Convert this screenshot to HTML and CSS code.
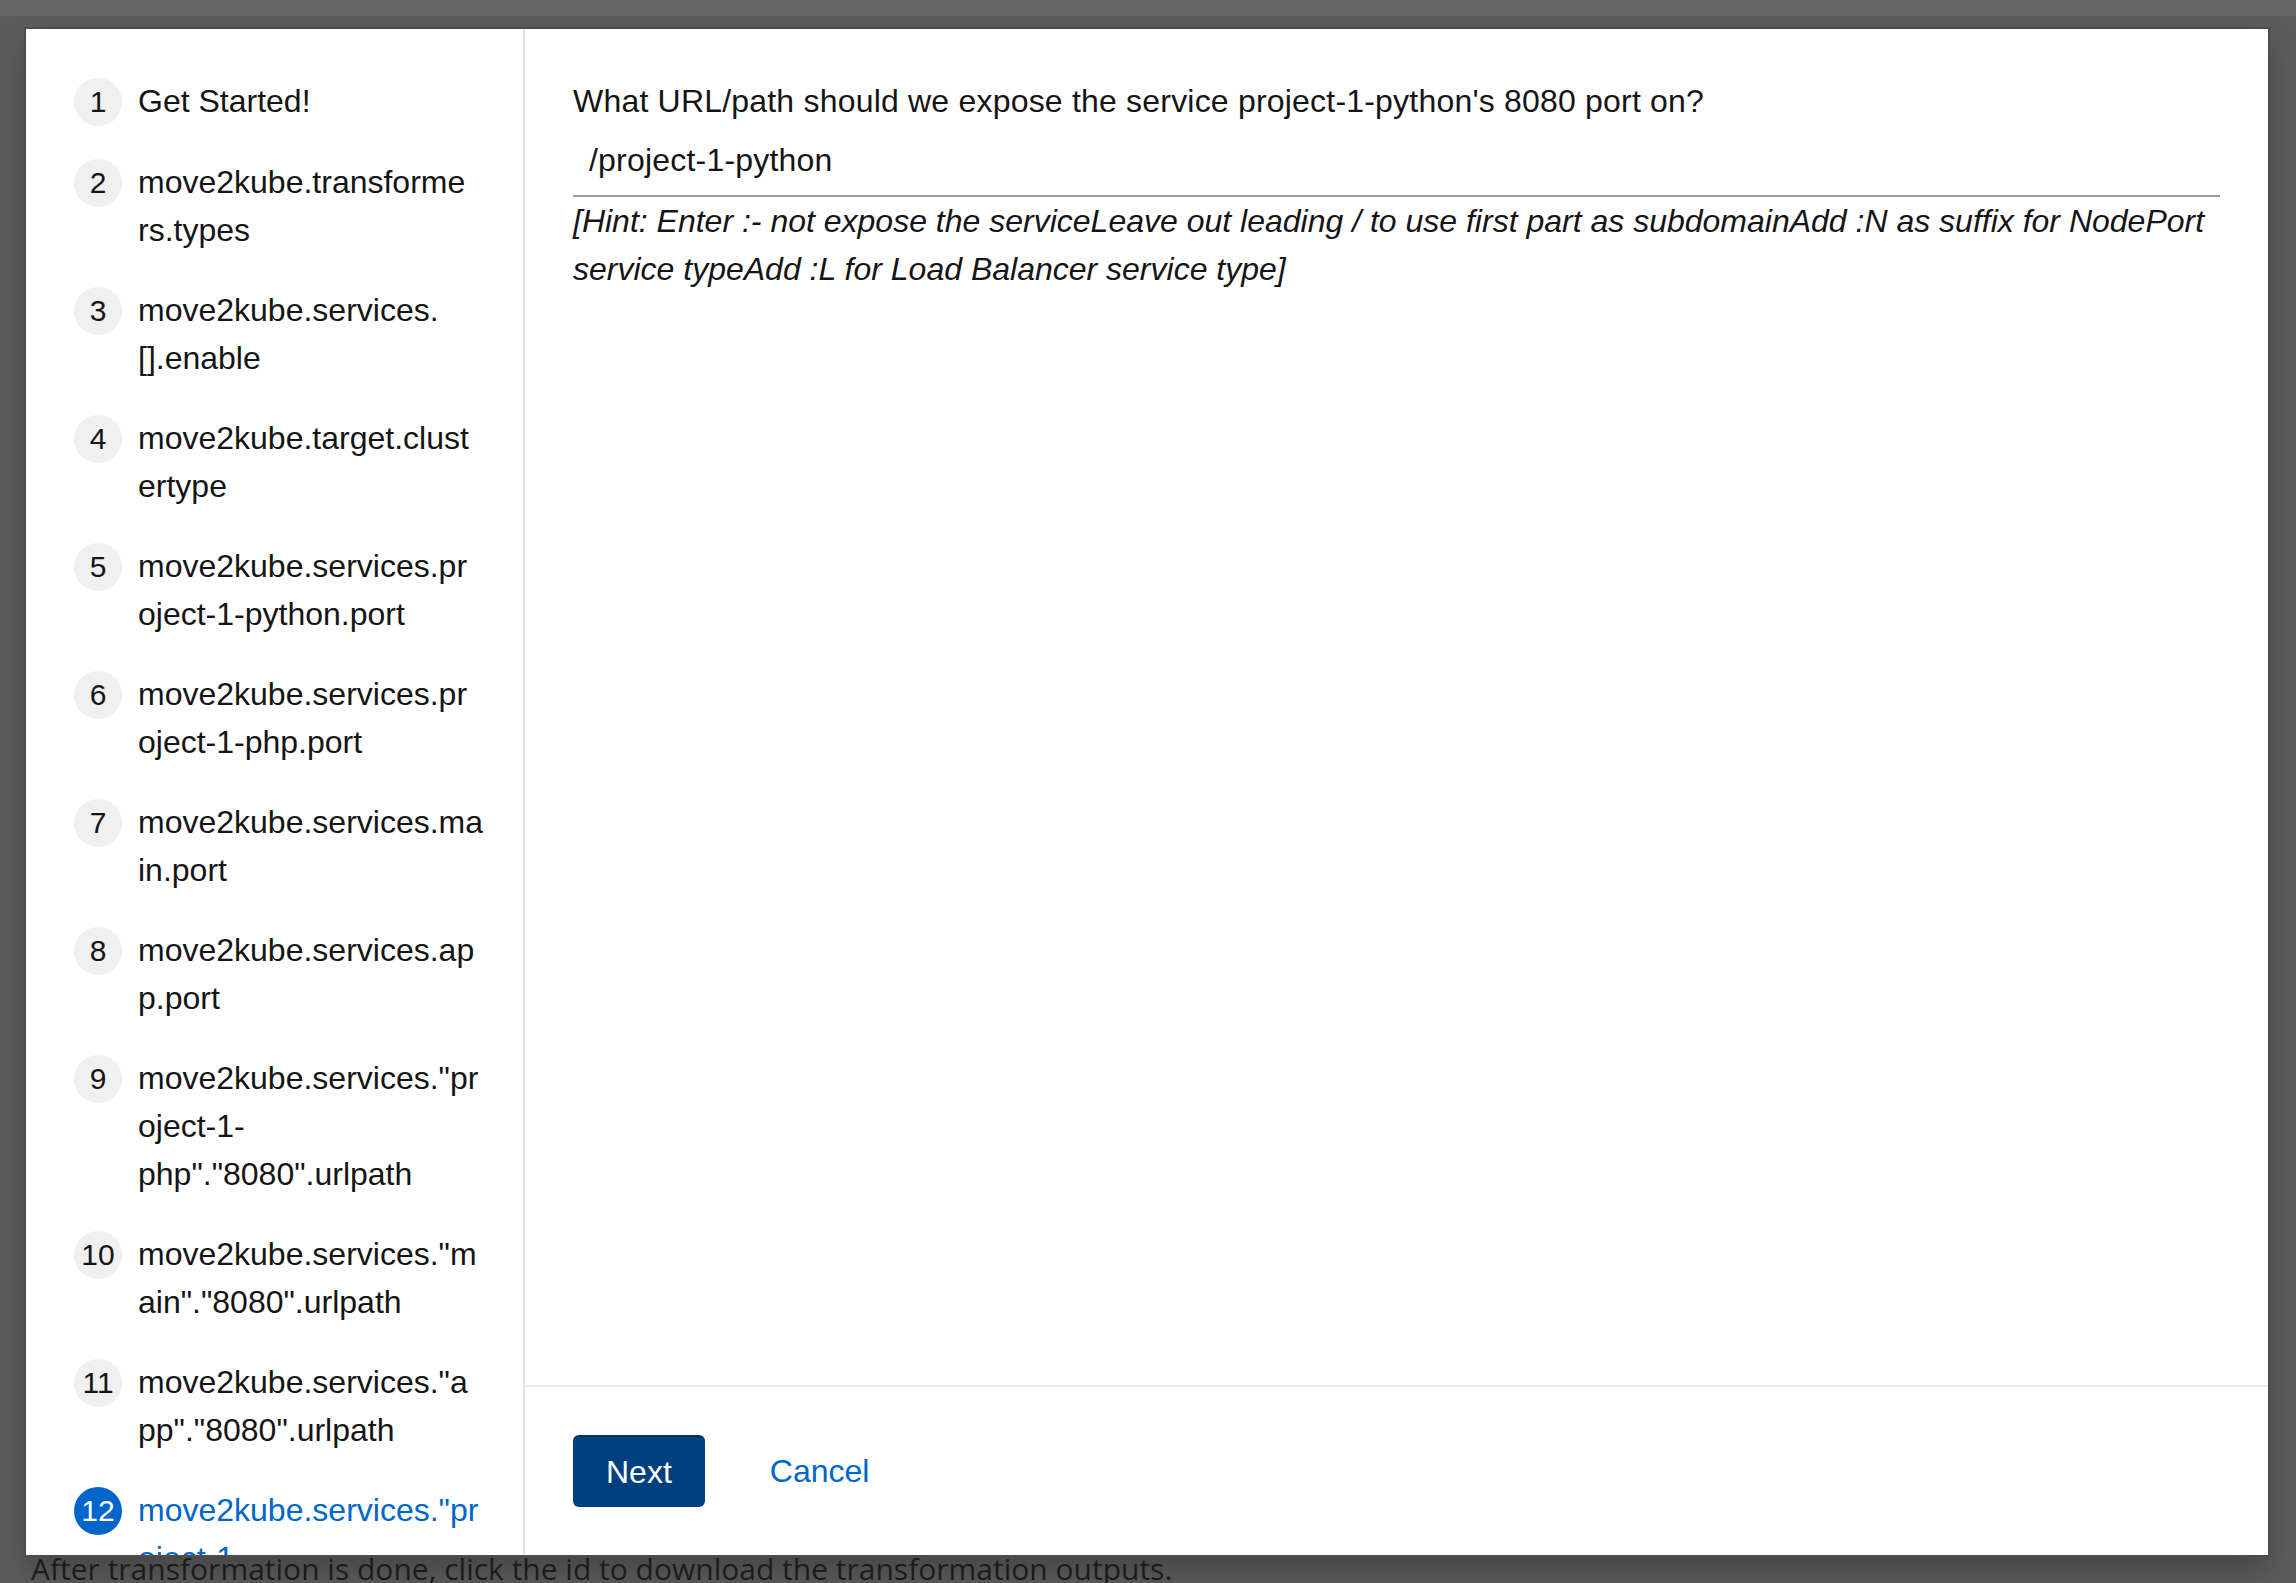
FILE: index.html
```html
<!DOCTYPE html>
<html lang="en">
<head>
<meta charset="utf-8">
<title>Move2Kube – QA</title>
<link rel="stylesheet" href="styles.css">
</head>
<body>
<div class="page-top"></div>
<div class="modal" role="dialog" aria-label="Transformation questions">
  <nav class="wizard-nav" aria-label="Steps">
    <ol class="steps">
      <li class="step"><span class="step-num">1</span><span class="step-label">Get Started!</span></li>
      <li class="step"><span class="step-num">2</span><span class="step-label">move2kube.transforme<br>rs.types</span></li>
      <li class="step"><span class="step-num">3</span><span class="step-label">move2kube.services.<br>[].enable</span></li>
      <li class="step"><span class="step-num">4</span><span class="step-label">move2kube.target.clust<br>ertype</span></li>
      <li class="step"><span class="step-num">5</span><span class="step-label">move2kube.services.pr<br>oject-1-python.port</span></li>
      <li class="step"><span class="step-num">6</span><span class="step-label">move2kube.services.pr<br>oject-1-php.port</span></li>
      <li class="step"><span class="step-num">7</span><span class="step-label">move2kube.services.ma<br>in.port</span></li>
      <li class="step"><span class="step-num">8</span><span class="step-label">move2kube.services.ap<br>p.port</span></li>
      <li class="step"><span class="step-num">9</span><span class="step-label">move2kube.services."pr<br>oject-1-<br>php"."8080".urlpath</span></li>
      <li class="step"><span class="step-num">10</span><span class="step-label">move2kube.services."m<br>ain"."8080".urlpath</span></li>
      <li class="step"><span class="step-num">11</span><span class="step-label">move2kube.services."a<br>pp"."8080".urlpath</span></li>
      <li class="step is-current"><span class="step-num">12</span><span class="step-label">move2kube.services."pr<br>oject-1-<br>python"."8080".urlpath</span></li>
    </ol>
  </nav>
  <div class="wizard-outer">
    <div class="wizard-main">
      <p class="question">What URL/path should we expose the service project-1-python's 8080 port on?</p>
      <input class="text-input" type="text" value="/project-1-python" aria-label="URL path">
      <p class="hint">[Hint: Enter :- not expose the serviceLeave out leading / to use first part as subdomainAdd :N as suffix for NodePort service typeAdd :L for Load Balancer service type]</p>
    </div>
    <footer class="wizard-footer">
      <button class="btn btn-primary" type="button">Next</button>
      <button class="btn btn-link" type="button">Cancel</button>
    </footer>
  </div>
</div>
<p class="page-note">After transformation is done, click the id to download the transformation outputs.</p>
</body>
</html>
```

FILE: styles.css
```css
* {
  box-sizing: border-box;
}

html,
body {
  margin: 0;
  padding: 0;
}

body {
  height: 1583px;
  overflow: hidden;
  background: linear-gradient(to bottom, #676767 0, #676767 16px, #5c5c5c 16px);
  font-family: "Liberation Sans", Arial, sans-serif;
  color: #151515;
}

.page-top {
  height: 16px;
}

.modal {
  display: flex;
  height: 1526px;
  margin: 13px 28px 0 26px;
  background: #ffffff;
  overflow: hidden;
  box-shadow: 0 0 0 2px #4d4d4d, 0 16px 32px rgba(0, 0, 0, 0.25);
}

/* ---------- wizard nav ---------- */
.wizard-nav {
  flex: none;
  width: 499px;
  padding: 48px 0 0 48px;
  border-right: 2px solid #e3e3e3;
  overflow: hidden;
}

.steps {
  list-style: none;
  margin: 0;
  padding: 0;
  display: flex;
  flex-direction: column;
  gap: 32px;
}

.step {
  display: flex;
  align-items: flex-start;
  gap: 16px;
  font-size: 32px;
  line-height: 48px;
  color: #151515;
}

.step-num {
  flex: none;
  width: 48px;
  height: 48px;
  margin-top: 1px;
  border-radius: 50%;
  background: #f0f0f0;
  display: flex;
  align-items: center;
  justify-content: center;
  font-size: 30px;
  line-height: 1;
  color: #151515;
}

.step-label {
  white-space: nowrap;
}

.step.is-current .step-num {
  background: #0066cc;
  color: #ffffff;
}

.step.is-current .step-label {
  color: #0066cc;
}

/* ---------- wizard body ---------- */
.wizard-outer {
  flex: 1;
  min-width: 0;
  display: flex;
  flex-direction: column;
}

.wizard-main {
  flex: 1;
  padding: 48px 48px 0 48px;
}

.question {
  margin: 0;
  font-size: 32px;
  line-height: 48px;
  letter-spacing: 0.2px;
}

.text-input {
  display: block;
  width: 100%;
  height: 72px;
  padding: 0 16px;
  border: 0;
  border-bottom: 2px solid #9c9c9c;
  background: #ffffff;
  font-family: "Liberation Sans", Arial, sans-serif;
  font-size: 32px;
  letter-spacing: 0.2px;
  color: #151515;
  outline: none;
}

.hint {
  margin: 0;
  font-size: 32px;
  line-height: 48px;
  font-style: italic;
}

/* ---------- footer ---------- */
.wizard-footer {
  flex: none;
  display: flex;
  align-items: center;
  padding: 48px;
  border-top: 2px solid #ececec;
}

.btn {
  height: 72px;
  padding: 0 33px;
  border: 0;
  border-radius: 6px;
  font-family: "Liberation Sans", Arial, sans-serif;
  font-size: 32px;
  line-height: 1;
  cursor: pointer;
}

.btn-primary {
  background: #004080;
  color: #ffffff;
  border-top: 2px solid #002f5e;
}

.btn-link {
  margin-left: 32px;
  background: transparent;
  color: #0066cc;
}

/* ---------- page behind the backdrop ---------- */
.page-note {
  margin: 0 0 0 31px;
  font-family: "Open Sans", "Liberation Sans", sans-serif;
  font-size: 30px;
  line-height: 28px;
  color: #1c1c1c;
  white-space: nowrap;
}
```
